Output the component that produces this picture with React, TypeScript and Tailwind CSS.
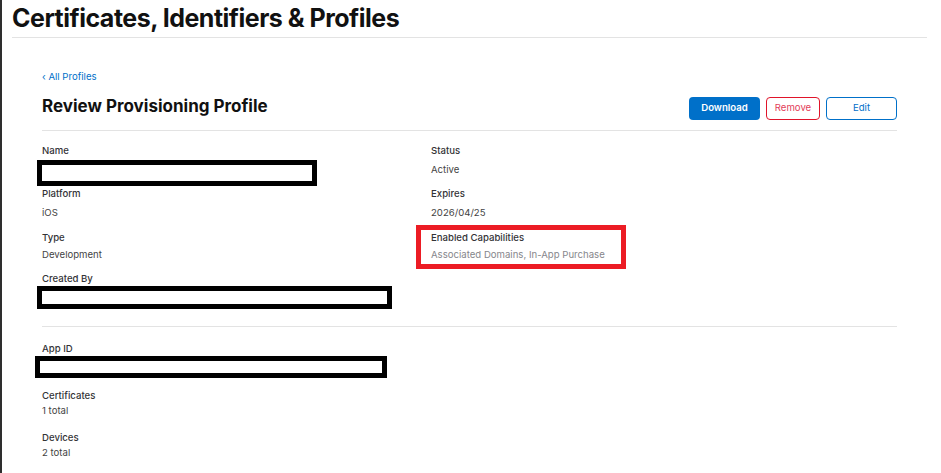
import React from "react"

function Label({ children, className = "" }: { children: React.ReactNode; className?: string }) {
  return <div className={`text-[9.6px] leading-[12px] font-medium text-[#333336] ${className}`}>{children}</div>
}

function Value({ children, className = "", muted = false }: { children: React.ReactNode; className?: string; muted?: boolean }) {
  return (
    <div className={`text-[9.6px] leading-[12px] ${muted ? "text-[#86868b]" : "text-[#444]"} ${className}`}>{children}</div>
  )
}

function Redacted({ className = "" }: { className?: string }) {
  return <div className={`border-[5px] border-black bg-white ${className}`} />
}

export default function App() {
  return (
    <div className="h-[473px] border-l-2 border-[#2e2e2e] bg-white font-['Inter',sans-serif] text-[#1d1d1f] overflow-hidden">
      {/* page header */}
      <div className="ml-[10px] mr-[14px] border-b border-[#e3e3e3] h-[38px]">
        <h1 className="text-[25px] leading-[37px] font-bold tracking-[-0.5px] text-[#111]">
          Certificates, Identifiers &amp; Profiles
        </h1>
      </div>

      <div className="ml-[40px] mr-[44px]">
        <a className="block mt-[33px] text-[9.6px] leading-[12px] text-[#0070c9]">‹ All Profiles</a>

        <div className="flex justify-between items-start mt-[12px] pb-[10px] border-b border-[#e3e3e3]">
          <h2 className="text-[17px] leading-[22px] font-bold text-[#111]">Review Provisioning Profile</h2>
          <div className="flex gap-[6px] mt-[2px]">
            <button className="w-[71px] h-[23px] rounded-[4px] bg-[#0070c9] text-white text-[9.6px] font-semibold">
              Download
            </button>
            <button className="w-[54px] h-[23px] rounded-[4px] border border-[#e0142a] text-[#e3405a] text-[9.6px]">
              Remove
            </button>
            <button className="w-[71px] h-[23px] rounded-[4px] border border-[#0070c9] text-[#0070c9] text-[9.6px]">
              Edit
            </button>
          </div>
        </div>

        {/* profile details */}
        <div className="grid grid-cols-[389px_1fr] pb-[17px] border-b border-[#e3e3e3]">
          <div className="flex flex-col mt-[14px]">
            <Label>Name</Label>
            <Redacted className="mt-[3px] ml-[-5px] w-[280px] h-[26px]" />
            <Label className="mt-[2px]">Platform</Label>
            <Value className="mt-[7px]">iOS</Value>
            <Label className="mt-[13px]">Type</Label>
            <Value className="mt-[5px]">Development</Value>
            <Label className="mt-[12px]">Created By</Label>
            <Redacted className="mt-[1px] ml-[-5px] w-[355px] h-[23px]" />
          </div>
          <div className="flex flex-col items-start mt-[14px]">
            <Label>Status</Label>
            <Value className="mt-[7px]">Active</Value>
            <Label className="mt-[12px]">Expires</Label>
            <Value className="mt-[7px]">2026/04/25</Value>
            <div className="mt-[6px] ml-[-15px] w-[210px] border-[5px] border-[#ec1c24] pl-[10px] pt-[2px] pb-[3px]">
              <Label>Enabled Capabilities</Label>
              <Value muted className="mt-[5px]">Associated Domains, In-App Purchase</Value>
            </div>
          </div>
        </div>

        <div className="flex flex-col mt-[16px]">
          <Label>App ID</Label>
          <Redacted className="mt-[1px] ml-[-7px] w-[352px] h-[22px]" />
          <Label className="mt-[12px]">Certificates</Label>
          <Value className="mt-[3px]">1 total</Value>
          <Label className="mt-[15px]">Devices</Label>
          <Value className="mt-[3px]">2 total</Value>
        </div>
      </div>
    </div>
  )
}
